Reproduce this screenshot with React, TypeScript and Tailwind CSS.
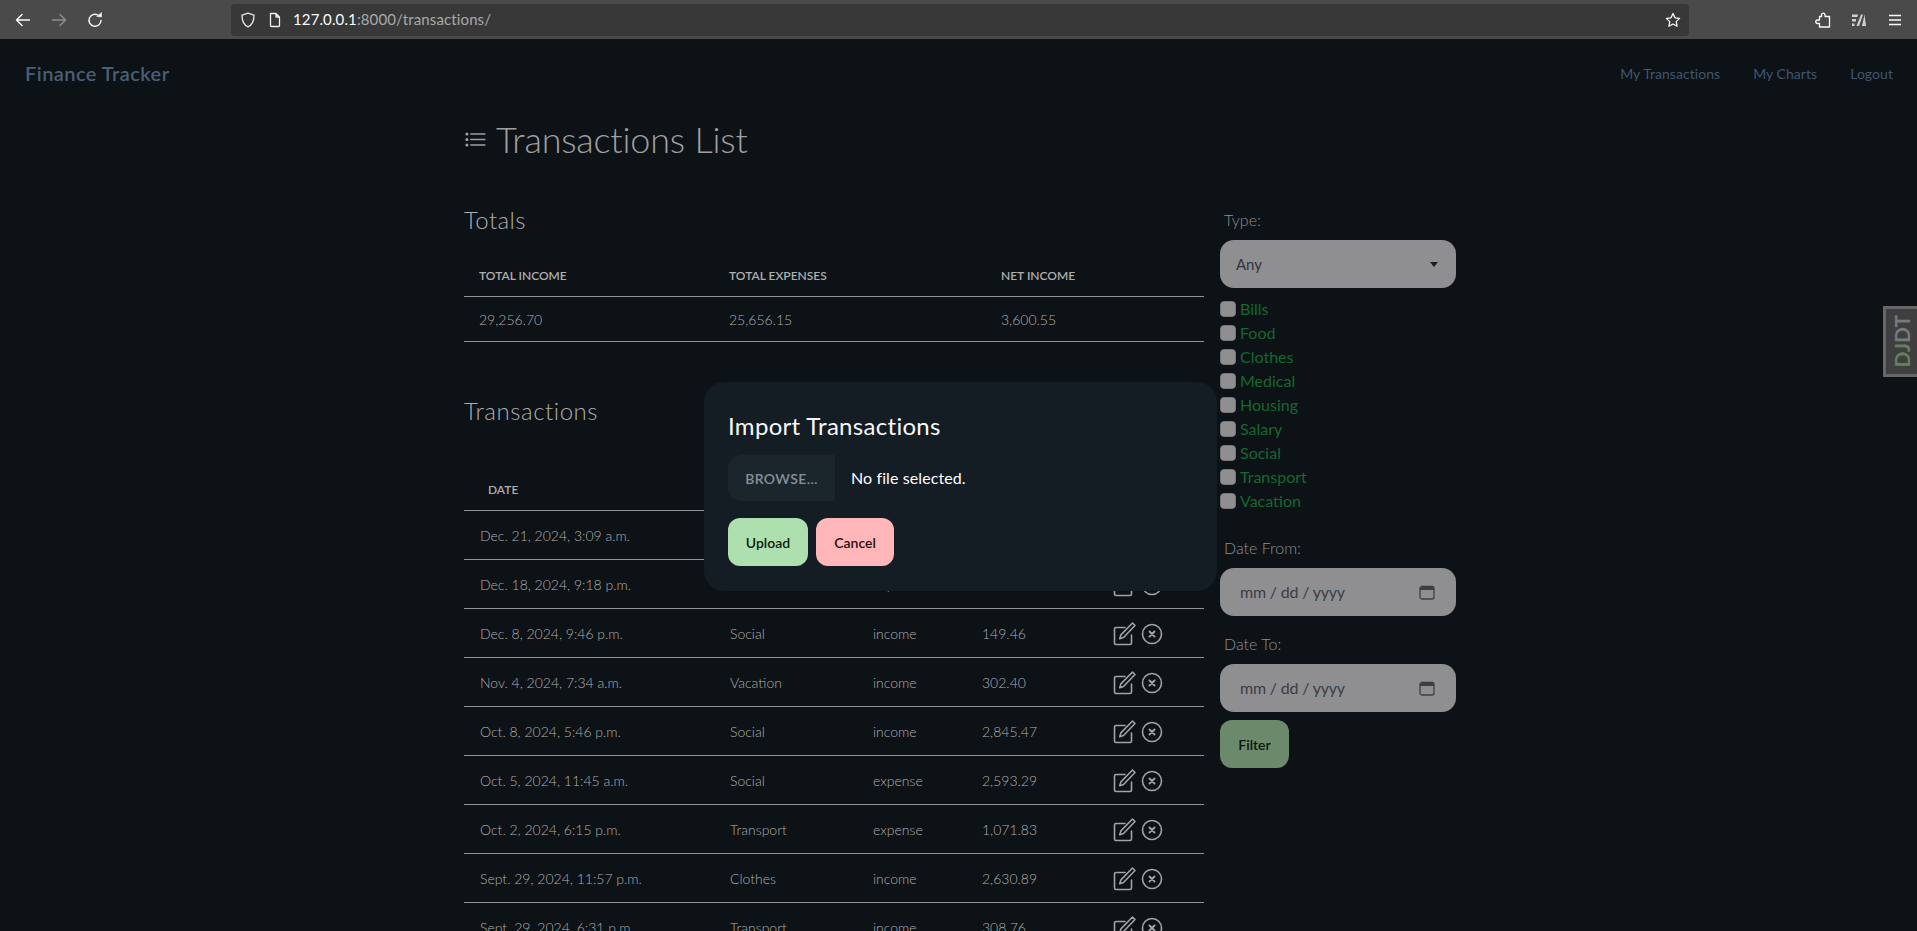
import React from "react";
import { IoListOutline } from "react-icons/io5";

const rows = [
  ["Dec. 21, 2024, 3:09 a.m.", "", "", ""],
  ["Dec. 18, 2024, 9:18 p.m.", "", "expense", ""],
  ["Dec. 8, 2024, 9:46 p.m.", "Social", "income", "149.46"],
  ["Nov. 4, 2024, 7:34 a.m.", "Vacation", "income", "302.40"],
  ["Oct. 8, 2024, 5:46 p.m.", "Social", "income", "2,845.47"],
  ["Oct. 5, 2024, 11:45 a.m.", "Social", "expense", "2,593.29"],
  ["Oct. 2, 2024, 6:15 p.m.", "Transport", "expense", "1,071.83"],
  ["Sept. 29, 2024, 11:57 p.m.", "Clothes", "income", "2,630.89"],
  ["Sept. 29, 2024, 6:31 p.m.", "Transport", "income", "308.76"],
];
const cats = ["Bills", "Food", "Clothes", "Medical", "Housing", "Salary", "Social", "Transport", "Vacation"];

function Toolbar() {
  return (
    <div className="h-[39px] bg-[#4a4a4a] flex items-center text-white shrink-0">
      <div className="w-[231px] flex items-center pl-[15px] gap-[20px]">
        <svg width="16" height="16" viewBox="0 0 16 16" fill="none" stroke="#fbfbfe" strokeWidth="1.4" strokeLinecap="round" strokeLinejoin="round"><path d="M14.500 8H1.500M7 2.500 1.500 8 7 13.500" /></svg>
        <svg width="16" height="16" viewBox="0 0 16 16" fill="none" stroke="#8f8f8f" strokeWidth="1.4" strokeLinecap="round" strokeLinejoin="round"><path d="M1.500 8h13M9 2.500 14.500 8 9 13.500" /></svg>
        <svg width="16" height="16" viewBox="0 0 16 16" fill="none" stroke="#fbfbfe" strokeWidth="1.4" strokeLinecap="round" strokeLinejoin="round"><path d="M14 8.500A6 6 0 1 1 11 3" /><path d="M10 4.500 14.500 5V0.800z" fill="#fbfbfe" strokeWidth="0.5" /></svg>
      </div>
      <div className="w-[1458px] h-[32px] bg-[#383838] rounded-[4px] flex items-center pl-[9px] pr-[8px]">
        <svg width="16" height="16" viewBox="0 0 16 16" fill="none" stroke="#e8e8e8" strokeWidth="1.3" strokeLinejoin="round"><path d="M8 1.200 14 3.200C14 9 12.500 12.800 8 14.800 3.500 12.800 2 9 2 3.200Z" /></svg>
        <svg className="ml-[11px]" width="16" height="16" viewBox="0 0 16 16" fill="none" stroke="#f0f0f0" strokeWidth="1.3" strokeLinejoin="round"><path d="M3.500 1.500h5.500l3.500 3.500v8.500a1 1 0 0 1-1 1h-7a1 1 0 0 1-1-1zM9 1.500V5h3.500" /></svg>
        <span className="ml-[10px] -mt-[1px] text-[15px] tracking-[0.12px] text-[#fbfbfe] font-['Lato',sans-serif]">127.0.0.1<span className="text-[#a8a8a8]">:8000/transactions/</span></span>
        <svg className="ml-auto" width="16" height="16" viewBox="0 0 16 16" fill="none" stroke="#fbfbfe" strokeWidth="1.3" strokeLinejoin="round"><path d="m8 1.500 2 4.300 4.600.6-3.400 3.200.9 4.600L8 12l-4.100 2.200.9-4.600L1.400 6.400 6 5.800z" /></svg>
      </div>
      <div className="flex-1 flex items-center justify-end pr-[14px] gap-[20px]">
        <svg width="16" height="16" viewBox="0 0 16 16" fill="none" stroke="#fbfbfe" strokeWidth="1.3" strokeLinejoin="round"><path d="M6.500 2.500a1.800 1.800 0 0 1 3.500 0V4.500h4.500V15H4.500v-3.500H2.500a1.700 1.700 0 0 1 0-3.500h2V4.500h2z" /></svg>
        <svg width="16" height="16" viewBox="0 0 16 16" fill="#d0d0d0"><path d="M1 2.500h6l-.6 2.500H1zM1 7h4v2.500H1zM1 11.500h2.500v2.500H1zM10 2.500h2L8 14H5.500zM13.500 2.500 15 14h-4z" /></svg>
        <svg width="16" height="16" viewBox="0 0 16 16" fill="none" stroke="#fbfbfe" strokeWidth="1.4"><path d="M2 3.500h12M2 8h12M2 12.500h12" /></svg>
      </div>
    </div>
  );
}

function Actions() {
  return (
    <div className="flex items-center gap-[2px] ml-[1px] mt-[1px]">
      <svg width="26" height="26" viewBox="0 0 26 26" fill="none" stroke="#a3a3a3" strokeWidth="1.6" strokeLinejoin="round" strokeLinecap="round">
        <path d="M20.500 14v8a1.500 1.500 0 0 1-1.500 1.500H5A1.500 1.500 0 0 1 3.500 22V8A1.500 1.500 0 0 1 5 6.500h9" />
        <path d="M21.500 2 24 4.500 12.500 16.500l-3.800 1.200 1.200-3.800z" />
      </svg>
      <svg width="26" height="26" viewBox="0 0 26 26" fill="none" stroke="#a3a3a3">
        <circle cx="13" cy="13" r="9.500" strokeWidth="1.6" />
        <path d="M10.500 10.500l5 5M15.500 10.500l-5 5" strokeWidth="1.9" strokeLinecap="round" />
      </svg>
    </div>
  );
}

function Sidebar() {
  const input = "h-[48px] w-[236px] rounded-[14px] bg-[#8f8f91] flex items-center";
  const Cal = () => (
    <svg className="ml-auto mr-[21px]" width="16" height="16" viewBox="0 0 16 16" fill="none" stroke="#3c3f46" strokeWidth="1.3"><rect x="1" y="2.500" width="14" height="12.500" rx="2" /><path d="M1 4.500h14" strokeWidth="3" /></svg>
  );
  return (
    <aside className="w-[236px] ml-[16px] pt-[8px] text-[16px]">
      <div className="pl-[4px] h-[24px] leading-[24px] text-[#8d9094] font-light">Type:</div>
      <div className={`${input} mt-[8px] pl-[16px] pr-[18px] text-[#2f3440] text-[15px]`}>
        Any
        <span className="ml-auto w-0 h-0 border-x-[4px] border-x-transparent border-t-[5px] border-t-[#1a1c20]" />
      </div>
      <div className="mt-[9px]">
        {cats.map((c) => (
          <div key={c} className="h-[24px] flex items-center gap-[4px] text-[#15682f]">
            <span className="w-[16px] h-[16px] rounded-[4px] bg-[#8f8f91] border border-[#77777a]" />
            <span className="-mt-[1px]">{c}</span>
          </div>
        ))}
      </div>
      <div className="mt-[23px] pl-[4px] h-[24px] leading-[24px] text-[#8d9094] font-light">Date From:</div>
      <div className={`${input} mt-[8px] pl-[20px] text-[#3a3d44] tracking-[-0.2px]`}>mm / dd / yyyy<Cal /></div>
      <div className="mt-[16px] pl-[4px] h-[24px] leading-[24px] text-[#8d9094] font-light">Date To:</div>
      <div className={`${input} mt-[8px] pl-[20px] text-[#3a3d44] tracking-[-0.2px]`}>mm / dd / yyyy<Cal /></div>
      <button className="mt-[8px] w-[69px] h-[48px] rounded-[12px] bg-[#6b8a6b] text-[#0e140f] text-[14px] font-semibold">Filter</button>
    </aside>
  );
}

export default function App() {
  return (
    <div className="relative h-[931px] overflow-hidden flex flex-col bg-[#0c1216] font-['Lato',sans-serif]">
      <Toolbar />
      <nav className="h-[69px] flex items-center justify-between pl-[25px] pr-[24px] shrink-0">
        <span className="text-[20px] -mt-[2px] font-semibold tracking-[0.45px] text-[#4a5f75]">Finance Tracker</span>
        <div className="flex gap-[33px] text-[14px] tracking-[0.05px] text-[#3f5670]">
          <span>My Transactions</span><span>My Charts</span><span>Logout</span>
        </div>
      </nav>
      <main className="ml-[464px] flex-1 min-h-0 w-[1000px]">
        <h1 className="h-[62px] flex items-center gap-[8px] text-[36px] font-light text-[#a0a0a0] tracking-[-0.2px]">
          <IoListOutline className="text-[25px] -ml-[1px]" />
          Transactions List
        </h1>
        <div className="flex mt-[30px]">
          <div className="w-[740px] shrink-0 text-[#aeaeae]">
            <h2 className="text-[24px] leading-[40px] font-light tracking-[0.4px]">Totals</h2>
            <div className="mt-[14px] h-[43px] pt-[2px] grid grid-cols-[250px_272px_1fr] items-center pl-[15px] border-b border-[#8f9296] text-[12px] font-semibold">
              <span>TOTAL INCOME</span><span>TOTAL EXPENSES</span><span>NET INCOME</span>
            </div>
            <div className="h-[45px] grid grid-cols-[250px_272px_1fr] items-center pl-[15px] border-b border-[#8f9296] text-[14px] font-light">
              <span>29,256.70</span><span>25,656.15</span><span>3,600.55</span>
            </div>
            <h2 className="mt-[49px] text-[24px] leading-[40px] font-light tracking-[0.55px]">Transactions</h2>
            <div className="mt-[36px] h-[44px] pt-[2px] pl-[24px] flex items-center border-b border-[#8f9296] text-[12px] font-semibold">DATE</div>
            {rows.map((r) => (
              <div key={r[0]} className="h-[49px] grid grid-cols-[250px_143px_109px_128px_1fr] items-center pl-[16px] border-b border-[#8f9296] text-[14px] font-light">
                <span>{r[0]}</span><span>{r[1]}</span><span>{r[2]}</span><span>{r[3]}</span>
                <Actions />
              </div>
            ))}
          </div>
          <Sidebar />
        </div>
      </main>
      <div className="absolute left-[704px] top-[382px] w-[513px] h-[209px] rounded-[20px] bg-[#141c24] p-[24px] text-white">
        <h3 className="text-[24px] leading-[32px] tracking-[0.3px] text-[#f4f8fb] mt-[4px]">Import Transactions</h3>
        <div className="flex items-center mt-[13px] h-[46px]">
          <span className="w-[107px] h-full flex items-center justify-center rounded-l-[14px] bg-[#1b252c] text-[#87909a] text-[14px] font-semibold tracking-[0.4px]">BROWSE…</span>
          <span className="ml-[16px] text-[16px] tracking-[0.1px]">No file selected.</span>
        </div>
        <div className="flex gap-[8px] mt-[17px]">
          <button className="w-[80px] h-[48px] rounded-[12px] bg-[#aedfae] text-[#0d1a0d] text-[14px] font-semibold">Upload</button>
          <button className="w-[78px] h-[48px] rounded-[12px] bg-[#ffb6b9] text-[#2a0d0d] text-[14px] font-semibold">Cancel</button>
        </div>
      </div>
      <div className="absolute right-0 top-[306px] w-[34px] h-[71px] border-[3px] border-r-0 border-[#666] bg-[#3f3f3f] flex items-center justify-center">
        <span className="[writing-mode:vertical-rl] rotate-180 text-[21px] leading-none font-bold text-[#77797b]"><span className="text-[#66805f]">DJ</span>DT</span>
      </div>
    </div>
  );
}
